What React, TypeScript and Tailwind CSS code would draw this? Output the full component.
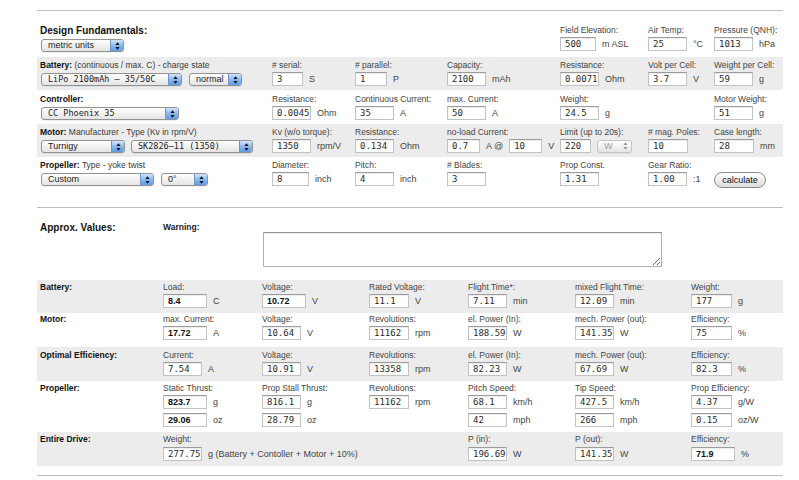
import clsx from "clsx";
import type { ReactNode } from "react";

const sans = "font-['Liberation_Sans',Arial,sans-serif]";

const Inp = ({ v, w = "w-[39px]", bold }: { v: string; w?: string; bold?: boolean }) => (
  <div
    className={clsx(
      "h-[14px] shrink-0 overflow-hidden whitespace-nowrap border border-[#c2c2c2] border-t-[#9c9c9c] bg-white pl-[4px] text-[9px] leading-[12px] shadow-[inset_0_1px_1px_rgba(0,0,0,0.08)]",
      bold
        ? "font-['Liberation_Sans',Arial,sans-serif] font-bold text-[#111]"
        : "font-['DejaVu_Sans_Mono',monospace] text-[#2a2a2a]",
      w
    )}
  >
    {v}
  </div>
);

const Arrows = ({ color }: { color: string }) => (
  <svg width="5" height="8" viewBox="0 0 5 8">
    <path d="M2.5 0.3 L4.6 3 L0.4 3 Z M0.4 5 L4.6 5 L2.5 7.7 Z" fill={color} />
  </svg>
);

const Sel = ({ v, w, mono, off }: { v: string; w: string; mono?: boolean; off?: boolean }) => (
  <div
    className={clsx(
      "flex h-[13px] shrink-0 overflow-hidden rounded-[3px] border bg-linear-to-b from-white to-[#e4e4e4] shadow-[0_1px_0_rgba(0,0,0,0.06)]",
      off ? "border-[#c4c4c4]" : "border-[#929292]",
      w
    )}
  >
    <span
      className={clsx(
        "flex-1 overflow-hidden whitespace-nowrap pl-[6px] leading-[11px]",
        mono ? "font-['DejaVu_Sans_Mono',monospace] text-[8.5px]" : "font-['Liberation_Sans',Arial,sans-serif] text-[9px]",
        off ? "text-[#9a9a9a]" : "text-[#1a1a1a]"
      )}
    >
      {v}
    </span>
    {off ? (
      <span className="flex w-[12px] items-center justify-center">
        <Arrows color="#9a9a9a" />
      </span>
    ) : (
      <span className="flex w-[13px] items-center justify-center border-l border-[#7396c8] bg-linear-to-b from-[#d3e4fa] via-[#8ab8ef] to-[#5e9be6]">
        <Arrows color="#111" />
      </span>
    )}
  </div>
);

const Unit = ({ children }: { children: ReactNode }) => (
  <span className="whitespace-nowrap text-[9px] leading-[12px] text-[#444]">{children}</span>
);

const F = ({ label, children, gap = "mt-[2px]" }: { label?: string; children?: ReactNode; gap?: string }) => (
  <div>
    <div className="h-[10px] whitespace-nowrap text-[8.5px] leading-[10px] text-[#444]">{label}</div>
    <div className={clsx("flex items-center gap-[6px]", gap)}>{children}</div>
  </div>
);

const Title = ({ b, rest }: { b: string; rest?: string }) => (
  <div className="h-[10px] whitespace-nowrap text-[8.5px] leading-[10px] text-[#3a3a3a]">
    <span className="font-bold text-[#111]">{b}</span>
    {rest}
  </div>
);

const g1 = "grid grid-cols-[232px_83px_92px_113px_88px_66px_1fr] pl-[3px]";
const g2 = "grid grid-cols-[123px_99px_107px_99px_107px_116px_1fr] pl-[3px]";

export default function App() {
  return (
    <div className={clsx("h-[480px] w-[799px] overflow-hidden bg-white", sans)}>
      <div className="ml-[37px] w-[746px]">
        <div className="mt-[10px] h-px bg-[#bdbdbd]" />

        {/* design fundamentals */}
        <div className={clsx(g1, "h-[46px] pt-[14px]")}>
          <div>
            <div className="text-[10px] font-bold leading-[12px] text-[#111]">Design Fundamentals:</div>
            <div className="mt-[2px] ml-[1px]">
              <Sel v="metric units" w="w-[83px]" />
            </div>
          </div>
          <div />
          <div />
          <div />
          <F label="Field Elevation:">
            <Inp v="500" w="w-[36px]" />
            <Unit>m ASL</Unit>
          </F>
          <F label="Air Temp:">
            <Inp v="25" />
            <Unit>°C</Unit>
          </F>
          <F label="Pressure (QNH):">
            <Inp v="1013" />
            <Unit>hPa</Unit>
          </F>
        </div>

        <div className={clsx(g1, "h-[33px] bg-[#ececec] pt-[3px]")}>
          <div>
            <Title b="Battery:" rest=" (continuous / max. C) - charge state" />
            <div className="mt-[3px] ml-[1px] flex gap-[7px]">
              <Sel v="LiPo 2100mAh – 35/50C" w="w-[141px]" mono />
              <Sel v="normal" w="w-[53px]" />
            </div>
          </div>
          <F label="# serial:">
            <Inp v="3" w="w-[31px]" />
            <Unit>S</Unit>
          </F>
          <F label="# parallel:">
            <Inp v="1" w="w-[32px]" />
            <Unit>P</Unit>
          </F>
          <F label="Capacity:">
            <Inp v="2100" />
            <Unit>mAh</Unit>
          </F>
          <F label="Resistance:">
            <Inp v="0.0071" />
            <Unit>Ohm</Unit>
          </F>
          <F label="Volt per Cell:">
            <Inp v="3.7" />
            <Unit>V</Unit>
          </F>
          <F label="Weight per Cell:">
            <Inp v="59" />
            <Unit>g</Unit>
          </F>
        </div>

        <div className={clsx(g1, "h-[34px] pt-[4px]")}>
          <div>
            <Title b="Controller:" />
            <div className="mt-[3px] ml-[1px] flex">
              <Sel v="CC Phoenix 35" w="w-[138px]" mono />
            </div>
          </div>
          <F label="Resistance:">
            <Inp v="0.0045" />
            <Unit>Ohm</Unit>
          </F>
          <F label="Continuous Current:">
            <Inp v="35" />
            <Unit>A</Unit>
          </F>
          <F label="max. Current:">
            <Inp v="50" />
            <Unit>A</Unit>
          </F>
          <F label="Weight:">
            <Inp v="24.5" />
            <Unit>g</Unit>
          </F>
          <div />
          <F label="Motor Weight:">
            <Inp v="51" />
            <Unit>g</Unit>
          </F>
        </div>

        <div className={clsx(g1, "h-[33px] bg-[#ececec] pt-[3px]")}>
          <div>
            <Title b="Motor:" rest=" Manufacturer - Type (Kv in rpm/V)" />
            <div className="mt-[3px] ml-[1px] flex gap-[6px]">
              <Sel v="Turnigy" w="w-[84px]" />
              <Sel v="SK2826–11 (1350)" w="w-[122px]" mono />
            </div>
          </div>
          <F label="Kv (w/o torque):">
            <Inp v="1350" />
            <Unit>rpm/V</Unit>
          </F>
          <F label="Resistance:">
            <Inp v="0.134" />
            <Unit>Ohm</Unit>
          </F>
          <F label="no-load Current:">
            <Inp v="0.7" w="w-[33px]" />
            <Unit>A @</Unit>
            <Inp v="10" w="w-[33px]" />
            <Unit>V</Unit>
          </F>
          <F label="Limit (up to 20s):">
            <Inp v="220" w="w-[31px]" />
            <Sel v="W" w="w-[35px]" off />
          </F>
          <F label="# mag. Poles:">
            <Inp v="10" w="w-[40px]" />
          </F>
          <F label="Case length:">
            <Inp v="28" w="w-[40px]" />
            <Unit>mm</Unit>
          </F>
        </div>

        <div className={clsx(g1, "h-[33px] pt-[3px]")}>
          <div>
            <Title b="Propeller:" rest=" Type - yoke twist" />
            <div className="mt-[3px] ml-[1px] flex gap-[7px]">
              <Sel v="Custom" w="w-[113px]" />
              <Sel v="0°" w="w-[47px]" />
            </div>
          </div>
          <F label="Diameter:">
            <Inp v="8" w="w-[37px]" />
            <Unit>inch</Unit>
          </F>
          <F label="Pitch:">
            <Inp v="4" />
            <Unit>inch</Unit>
          </F>
          <F label="# Blades:">
            <Inp v="3" />
          </F>
          <F label="Prop Const.">
            <Inp v="1.31" />
          </F>
          <F label="Gear Ratio:">
            <Inp v="1.00" />
            <Unit>:1</Unit>
          </F>
          <F>
            <button className="h-[16px] w-[52px] rounded-full border border-[#8a8a8a] bg-linear-to-b from-white to-[#dedede] text-[9px] leading-[13px] text-[#111]">
              calculate
            </button>
          </F>
        </div>

        <div className="mt-[17px] h-px bg-[#bdbdbd]" />

        {/* approx values */}
        <div className="grid h-[72px] grid-cols-[123px_99px_1fr] pl-[3px] pt-[14px]">
          <div className="text-[10px] font-bold leading-[12px] text-[#111]">Approx. Values:</div>
          <div className="text-[8.5px] font-bold leading-[10px] text-[#222]">Warning:</div>
          <div className="pt-[10px]">
            <textarea
              readOnly
              className="ml-[1px] block h-[35px] w-[399px] border border-[#b0b0b0] border-t-[#909090] bg-white shadow-[inset_0_1px_1px_rgba(0,0,0,0.08)] outline-none"
            />
          </div>
        </div>

        <div className={clsx(g2, "h-[33px] bg-[#ececec] pt-[2px]")}>
          <Title b="Battery:" />
          <F label="Load:">
            <Inp v="8.4" w="w-[44px]" bold />
            <Unit>C</Unit>
          </F>
          <F label="Voltage:">
            <Inp v="10.72" w="w-[44px]" bold />
            <Unit>V</Unit>
          </F>
          <F label="Rated Voltage:">
            <Inp v="11.1" w="w-[40px]" />
            <Unit>V</Unit>
          </F>
          <F label="Flight Time*:">
            <Inp v="7.11" />
            <Unit>min</Unit>
          </F>
          <F label="mixed Flight Time:">
            <Inp v="12.09" />
            <Unit>min</Unit>
          </F>
          <F label="Weight:">
            <Inp v="177" w="w-[41px]" />
            <Unit>g</Unit>
          </F>
        </div>

        <div className={clsx(g2, "h-[34px] pt-[1px]")}>
          <Title b="Motor:" />
          <F label="max. Current:">
            <Inp v="17.72" w="w-[44px]" bold />
            <Unit>A</Unit>
          </F>
          <F label="Voltage:">
            <Inp v="10.64" />
            <Unit>V</Unit>
          </F>
          <F label="Revolutions:">
            <Inp v="11162" w="w-[40px]" />
            <Unit>rpm</Unit>
          </F>
          <F label="el. Power (In):">
            <Inp v="188.59" />
            <Unit>W</Unit>
          </F>
          <F label="mech. Power (out):">
            <Inp v="141.35" />
            <Unit>W</Unit>
          </F>
          <F label="Efficiency:">
            <Inp v="75" w="w-[41px]" />
            <Unit>%</Unit>
          </F>
        </div>

        <div className={clsx(g2, "h-[34px] bg-[#ececec] pt-[3px]")}>
          <Title b="Optimal Efficiency:" />
          <F label="Current:">
            <Inp v="7.54" />
            <Unit>A</Unit>
          </F>
          <F label="Voltage:">
            <Inp v="10.91" />
            <Unit>V</Unit>
          </F>
          <F label="Revolutions:">
            <Inp v="13358" w="w-[40px]" />
            <Unit>rpm</Unit>
          </F>
          <F label="el. Power (In):">
            <Inp v="82.23" />
            <Unit>W</Unit>
          </F>
          <F label="mech. Power (out):">
            <Inp v="67.69" />
            <Unit>W</Unit>
          </F>
          <F label="Efficiency:">
            <Inp v="82.3" w="w-[41px]" />
            <Unit>%</Unit>
          </F>
        </div>

        <div className={clsx(g2, "h-[51px] pt-[2px]")}>
          <Title b="Propeller:" />
          <div>
            <F label="Static Thrust:">
              <Inp v="823.7" w="w-[44px]" bold />
              <Unit>g</Unit>
            </F>
            <div className="mt-[4px] flex items-center gap-[6px]">
              <Inp v="29.06" w="w-[44px]" bold />
              <Unit>oz</Unit>
            </div>
          </div>
          <div>
            <F label="Prop Stall Thrust:">
              <Inp v="816.1" />
              <Unit>g</Unit>
            </F>
            <div className="mt-[4px] flex items-center gap-[6px]">
              <Inp v="28.79" />
              <Unit>oz</Unit>
            </div>
          </div>
          <F label="Revolutions:">
            <Inp v="11162" w="w-[40px]" />
            <Unit>rpm</Unit>
          </F>
          <div>
            <F label="Pitch Speed:">
              <Inp v="68.1" />
              <Unit>km/h</Unit>
            </F>
            <div className="mt-[4px] flex items-center gap-[6px]">
              <Inp v="42" />
              <Unit>mph</Unit>
            </div>
          </div>
          <div>
            <F label="Tip Speed:">
              <Inp v="427.5" />
              <Unit>km/h</Unit>
            </F>
            <div className="mt-[4px] flex items-center gap-[6px]">
              <Inp v="266" />
              <Unit>mph</Unit>
            </div>
          </div>
          <div>
            <F label="Prop Efficiency:">
              <Inp v="4.37" w="w-[41px]" />
              <Unit>g/W</Unit>
            </F>
            <div className="mt-[4px] flex items-center gap-[6px]">
              <Inp v="0.15" w="w-[41px]" />
              <Unit>oz/W</Unit>
            </div>
          </div>
        </div>

        <div className={clsx(g2, "h-[34px] bg-[#ececec] pt-[2px]")}>
          <Title b="Entire Drive:" />
          <F label="Weight:" gap="mt-[3px]">
            <Inp v="277.75" />
            <Unit>g (Battery + Contoller + Motor + 10%)</Unit>
          </F>
          <div />
          <div />
          <F label="P (in):" gap="mt-[3px]">
            <Inp v="196.69" />
            <Unit>W</Unit>
          </F>
          <F label="P (out):" gap="mt-[3px]">
            <Inp v="141.35" />
            <Unit>W</Unit>
          </F>
          <F label="Efficiency:" gap="mt-[3px]">
            <Inp v="71.9" w="w-[44px]" bold />
            <Unit>%</Unit>
          </F>
        </div>

        <div className="mt-[9px] h-px bg-[#bdbdbd]" />
      </div>
    </div>
  );
}
